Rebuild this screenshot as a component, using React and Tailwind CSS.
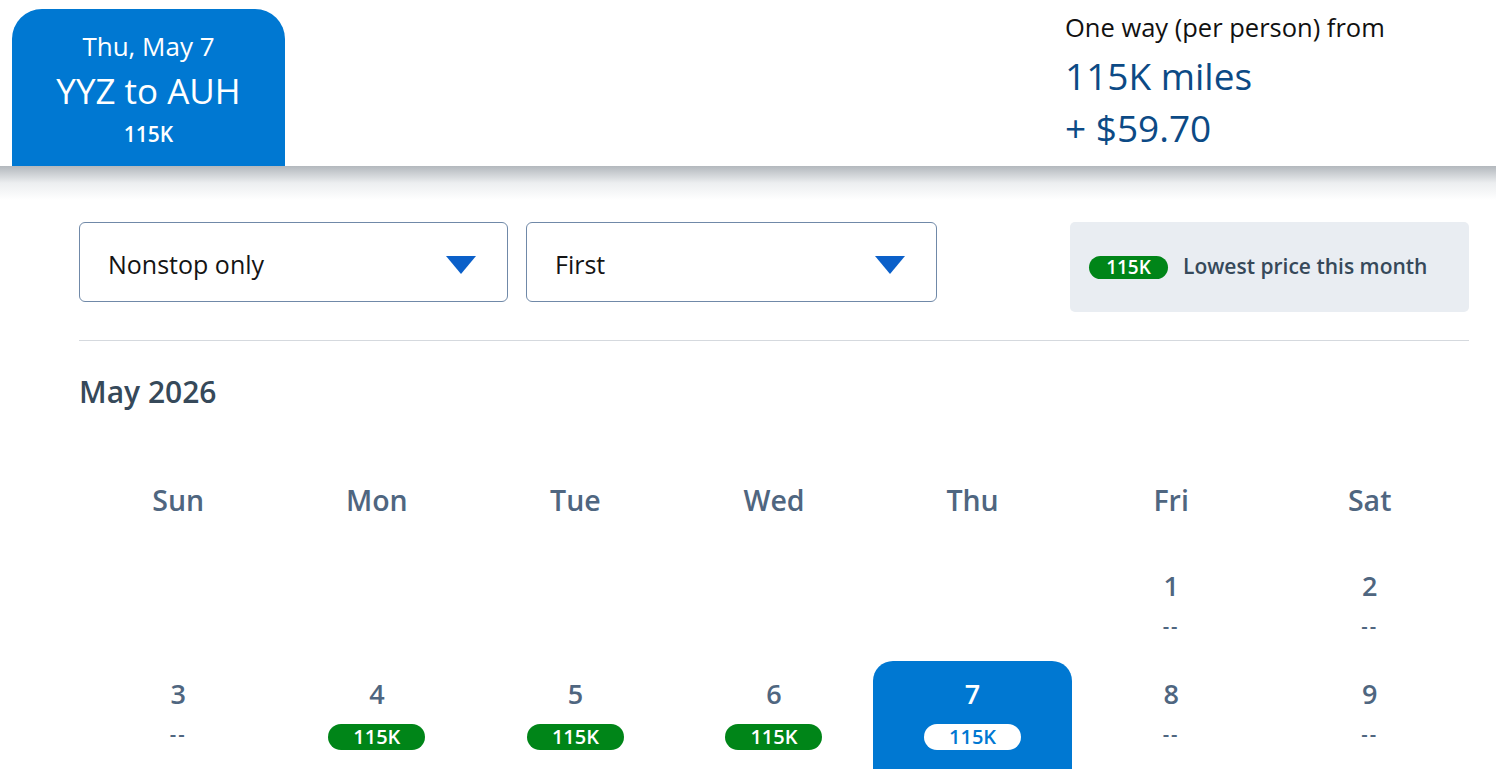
const days = ["Sun", "Mon", "Tue", "Wed", "Thu", "Fri", "Sat"];

const weeks = [
  [null, null, null, null, null, { d: 1 }, { d: 2 }],
  [
    { d: 3 },
    { d: 4, price: "115K" },
    { d: 5, price: "115K" },
    { d: 6, price: "115K" },
    { d: 7, price: "115K", selected: true },
    { d: 8 },
    { d: 9 },
  ],
];

function Caret() {
  return (
    <svg width="30" height="18" viewBox="0 0 30 18" className="shrink-0">
      <path d="M0 0 H30 L15 18 Z" fill="#0b60c9" />
    </svg>
  );
}

function Select({ label, width }) {
  return (
    <div
      className={`${width} h-[80px] flex items-center justify-between pl-[28px] pr-[31px] pt-[5px] border border-[#7089a8] rounded-[6px] bg-white`}
    >
      <span className="text-[25px] text-[#141414]">{label}</span>
      <Caret />
    </div>
  );
}

function Pill({ children, inverse }) {
  return (
    <span
      className={`w-[97px] h-[26px] flex items-center justify-center rounded-full text-[20px] font-semibold leading-none ${
        inverse ? "bg-white text-[#0078d2]" : "bg-[#008518] text-white"
      }`}
    >
      {children}
    </span>
  );
}

function DayCell({ cell }) {
  if (!cell) return <div className="h-[108px]" />;
  const sel = cell.selected;
  return (
    <div
      className={`h-[108px] flex flex-col items-center pt-[15px] ${
        sel ? "bg-[#0078d2] rounded-t-[20px]" : ""
      }`}
    >
      <span
        className={`text-[27px] leading-[36px] font-semibold ${
          sel ? "text-white" : "text-[#4f6680]"
        }`}
      >
        {cell.d}
      </span>
      {cell.price ? (
        <div className="mt-[12px]">
          <Pill inverse={sel}>{cell.price}</Pill>
        </div>
      ) : (
        <span className="mt-[9px] text-[20px] leading-[26px] font-semibold text-[#4f6680] tracking-[2px]">
          --
        </span>
      )}
    </div>
  );
}

export default function App() {
  return (
    <div className="w-[1496px] h-[774px] overflow-hidden bg-white font-['Open_Sans',sans-serif]">
      <header className="h-[166px] flex">
        <div className="ml-[12px] mt-[9px] w-[273px] h-[157px] rounded-t-[30px] bg-[#0078d2] text-white flex flex-col items-center pt-[19px]">
          <span className="text-[26px] leading-[36px]">Thu, May 7</span>
          <span className="text-[35px] leading-[48px] mt-[3px]">YYZ to AUH</span>
          <span className="text-[21px] leading-[28px] font-semibold mt-[5px]">115K</span>
        </div>
        <div className="ml-auto w-[431px] pt-[9px]">
          <p className="text-[25.5px] leading-[36px] text-[#111]">
            One way (per person) from
          </p>
          <p className="text-[37px] leading-[52px] text-[#0c4a85] mt-[5px]">
            115K miles
          </p>
          <p className="text-[37px] leading-[52px] text-[#0c4a85]">+ $59.70</p>
        </div>
      </header>
      <div className="h-[34px] bg-gradient-to-b from-[#b3b8bd] via-[#eceef0] to-white" />

      <main className="pl-[79px] pr-[27px]">
        <div className="flex items-start mt-[22px]">
          <Select label="Nonstop only" width="w-[429px]" />
          <div className="ml-[18px]">
            <Select label="First" width="w-[411px]" />
          </div>
          <div className="ml-auto w-[399px] h-[90px] rounded-[5px] bg-[#e9edf2] flex items-center pl-[19px] gap-[15px]">
            <span className="w-[79px] h-[23px] flex items-center justify-center rounded-full bg-[#008518] text-white text-[19px] font-semibold leading-none">
              115K
            </span>
            <span className="text-[21px] font-semibold text-[#36495a]">
              Lowest price this month
            </span>
          </div>
        </div>

        <div className="mt-[28px] border-t border-[#d5d9de]" />

        <h2 className="mt-[31px] text-[30px] leading-[40px] font-semibold text-[#36495a]">
          May 2026
        </h2>

        <div className="grid grid-cols-7 mt-[69px]">
          {days.map((d) => (
            <div
              key={d}
              className="h-[72px] text-center text-[28.5px] leading-[38px] font-semibold text-[#4f6680]"
            >
              {d}
            </div>
          ))}
          {weeks.map((w, i) =>
            w.map((c, j) => <DayCell key={`${i}-${j}`} cell={c} />)
          )}
        </div>
      </main>
    </div>
  );
}
